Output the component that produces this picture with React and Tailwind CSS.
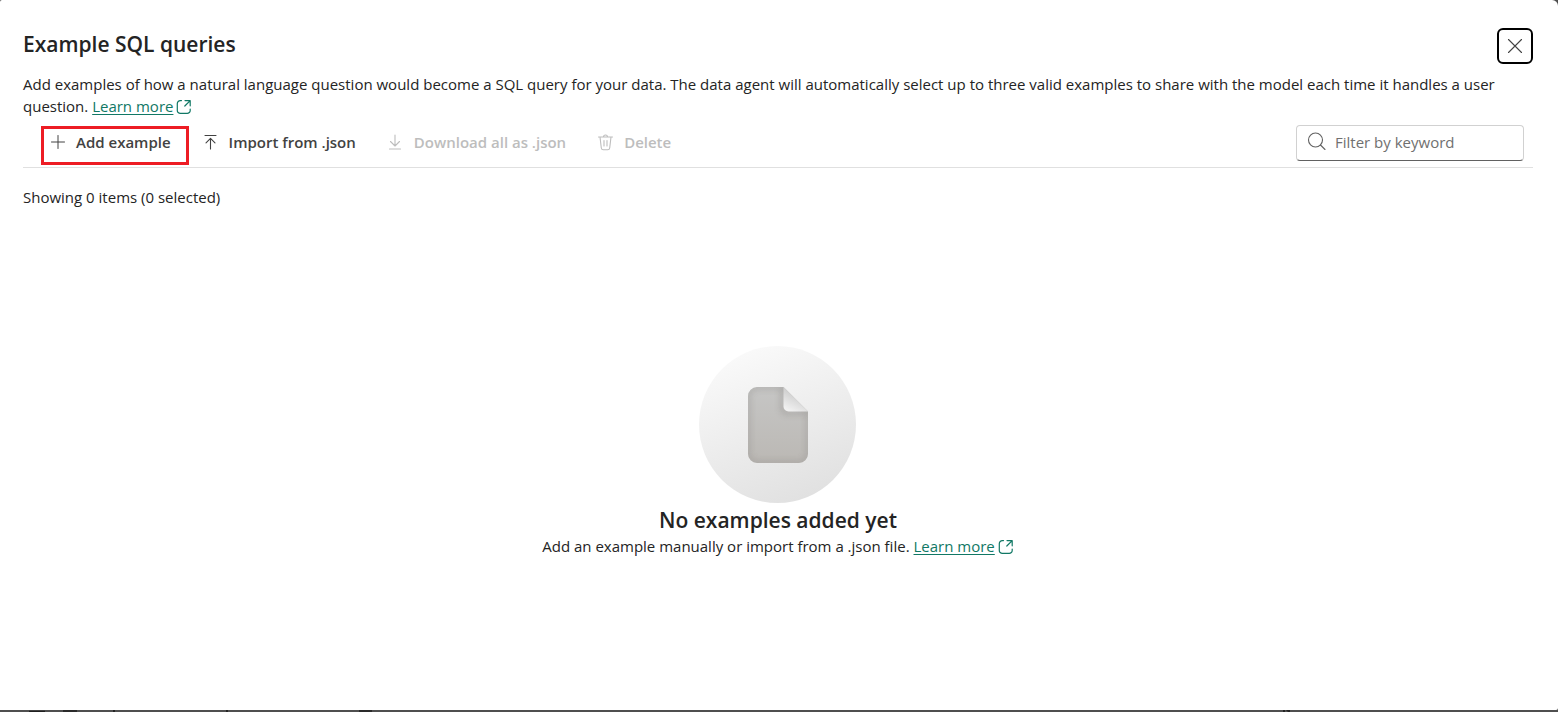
const stroke = {
  fill: "none",
  stroke: "currentColor",
  strokeLinecap: "round",
  strokeLinejoin: "round",
  "aria-hidden": true,
};

function AddIcon() {
  return (
    <svg className="size-5 shrink-0" viewBox="0 0 20 20" {...stroke}>
      <path d="M10 3.5v13M3.5 10h13" />
    </svg>
  );
}

function ImportIcon() {
  return (
    <svg className="size-5 shrink-0" viewBox="0 0 20 20" strokeWidth="1.1" {...stroke}>
      <path d="M4 3.5h11M9.500 17V6.300M5 10.800l4.5-4.5 4.5 4.5" />
    </svg>
  );
}

function DownloadIcon() {
  return (
    <svg className="size-5 shrink-0" viewBox="0 0 20 20" strokeWidth="1.1" {...stroke}>
      <path d="M3.500 17h11M9 3v10.5M4.5 9.5 9 14l4.5-4.5" />
    </svg>
  );
}

function DeleteIcon() {
  return (
    <svg className="size-5 shrink-0" viewBox="0 0 20 20" strokeWidth="1.1" {...stroke}>
      <path d="M2.500 5h14M7.500 5a2 2 0 0 1 4 0M4 5l1.300 11a2 2 0 0 0 2 1.700h4.400a2 2 0 0 0 2-1.700l1.300-11M8 8.500v5.500M11 8.500v5.500" />
    </svg>
  );
}

function SearchIcon() {
  return (
    <svg className="size-5 shrink-0 text-[#616161]" viewBox="0 0 20 20" strokeWidth="1.1" {...stroke}>
      <circle cx="8.500" cy="8" r="7" />
      <path d="m13.500 13 4.5 4.5" />
    </svg>
  );
}

function DismissIcon() {
  return (
    <svg className="size-5" viewBox="0 0 20 20" strokeWidth="1.1" {...stroke}>
      <path d="m3.5 3.5 13 13M16.5 3.5l-13 13" />
    </svg>
  );
}

function OpenIcon() {
  return (
    <svg className="ml-[3px] inline-block size-4 align-[-3px]" viewBox="0 0 16 16" strokeWidth="1.2" {...stroke}>
      <path d="M5.5 1.6H4.300a3 3 0 0 0-3 3v6.800a3 3 0 0 0 3 3h6.900a3 3 0 0 0 3-3V10M9 1.6h5.2v5.2M14.2 1.6 8.8 7" />
    </svg>
  );
}

function LearnMore() {
  return (
    <a href="#learn-more" className="whitespace-nowrap text-[#117865]">
      <span className="underline underline-offset-2">Learn more</span>
      <OpenIcon />
    </a>
  );
}

function ToolbarButton({ icon, children, disabled, highlighted }) {
  return (
    <button
      type="button"
      disabled={disabled}
      className="relative flex h-9 items-center gap-2 px-[15px] pb-0.5 font-semibold text-[#424242] disabled:text-[#bdbdbd]"
    >
      {icon}
      {children}
      {highlighted && (
        <span className="pointer-events-none absolute -right-[3px] -bottom-1 left-2 top-px border-3 border-[#ed1c24]" />
      )}
    </button>
  );
}

function EmptyIllustration() {
  return (
    <svg className="size-[158px]" viewBox="0 0 158 158" aria-hidden="true">
      <defs>
        <linearGradient id="disc" x1="0.3" y1="0" x2="0.7" y2="1">
          <stop offset="0" stopColor="#fafafa" />
          <stop offset="1" stopColor="#e0e0e0" />
        </linearGradient>
        <linearGradient id="page" x1="0" y1="0" x2="0" y2="1">
          <stop offset="0" stopColor="#c6c6c5" />
          <stop offset="1" stopColor="#bbb8b4" />
        </linearGradient>
        <linearGradient id="fold" x1="0.55" y1="0.35" x2="0.25" y2="0.95">
          <stop offset="0" stopColor="#d0d0d0" />
          <stop offset="1" stopColor="#f0f0f0" />
        </linearGradient>
        <filter id="soft" x="-30%" y="-30%" width="160%" height="160%">
          <feGaussianBlur stdDeviation="3" />
        </filter>
        <clipPath id="sheet">
          <path d="M57 41h27.5L109 65.500V108a9 9 0 0 1-9 9H58a9 9 0 0 1-9-9V50a9 9 0 0 1 9-9Z" />
        </clipPath>
      </defs>
      <circle cx="78.500" cy="78.500" r="78.500" fill="url(#disc)" />
      <g clipPath="url(#sheet)">
        <rect x="49" y="41" width="60" height="76" fill="url(#page)" />
        <path
          d="M57 41h27.5L109 65.500V108a9 9 0 0 1-9 9H58a9 9 0 0 1-9-9V50a9 9 0 0 1 9-9Z"
          fill="none"
          stroke="#8f8c89"
          strokeWidth="3"
          opacity="0.6"
          filter="url(#soft)"
        />
        <path d="M84 41v20a5 5 0 0 0 5 5h20v2H88a6 6 0 0 1-6-6V41Z" fill="#85827f" opacity="0.7" filter="url(#soft)" />
      </g>
      <path d="M84.500 41 109 65.500H89.500a5 5 0 0 1-5-5Z" fill="url(#fold)" />
    </svg>
  );
}

export default function App() {
  return (
    <div className="flex min-h-screen flex-col bg-[#4f4f4f] font-['Open_Sans','Noto_Sans',sans-serif] text-[15px] leading-[22px] text-[#242424]">
      <main
        role="dialog"
        aria-labelledby="dialog-title"
        className="flex flex-1 flex-col rounded-tl-xs rounded-tr-md rounded-br-xs bg-white pr-[25px] pl-[23px]"
      >
        <header className="flex items-start justify-between pt-7">
          <h1 id="dialog-title" className="text-[21px] leading-8 font-semibold">
            Example SQL queries
          </h1>
          <button
            type="button"
            aria-label="Close"
            className="flex size-9 items-center justify-center rounded-md border-2 border-black text-[#424242]"
          >
            <DismissIcon />
          </button>
        </header>

        <p className="mt-[9px]">
          Add examples of how a natural language question would become a SQL query for your data. The data agent will
          automatically select up to three valid examples to share with the model each time it handles a user question.{" "}
          <LearnMore />
        </p>

        <div className="mt-2 flex items-start justify-between border-b border-[#e0e0e0] pr-[9px] pb-1.5 pl-2.5">
          <div role="toolbar" aria-label="Example actions" className="flex">
            <ToolbarButton icon={<AddIcon />} highlighted>
              Add example
            </ToolbarButton>
            <ToolbarButton icon={<ImportIcon />}>Import from .json</ToolbarButton>
            <ToolbarButton icon={<DownloadIcon />} disabled>
              Download all as .json
            </ToolbarButton>
            <ToolbarButton icon={<DeleteIcon />} disabled>
              Delete
            </ToolbarButton>
          </div>
          <label className="flex h-9 w-[228px] items-center gap-2 rounded-sm border border-[#d1d1d1] border-b-[#616161] px-2.5 pb-0.5">
            <SearchIcon />
            <input
              type="text"
              aria-label="Filter by keyword"
              placeholder="Filter by keyword"
              className="w-full min-w-0 bg-transparent outline-none placeholder:text-[#707070]"
            />
          </label>
        </div>

        <p className="mt-[18px]">Showing 0 items (0 selected)</p>

        <section className="mt-[138px] flex flex-col items-center pb-8">
          <EmptyIllustration />
          <h2 className="text-[21px] leading-8 font-semibold">No examples added yet</h2>
          <p className="-mt-px">
            Add an example manually or import from a .json file. <LearnMore />
          </p>
        </section>
      </main>
      <svg className="block h-0.5 w-full shrink-0" aria-hidden="true">
        <path
          d="M29 1.500h16M63 1h14M359 1h13"
          stroke="#1f1f1f"
          strokeWidth="1.500"
        />
        <path d="M113 0h2v2h-2zM226 0h2v2h-2zM1283 0h2v2h-2zM1286 0h4v2h-2z" fill="#242424" />
      </svg>
    </div>
  );
}
